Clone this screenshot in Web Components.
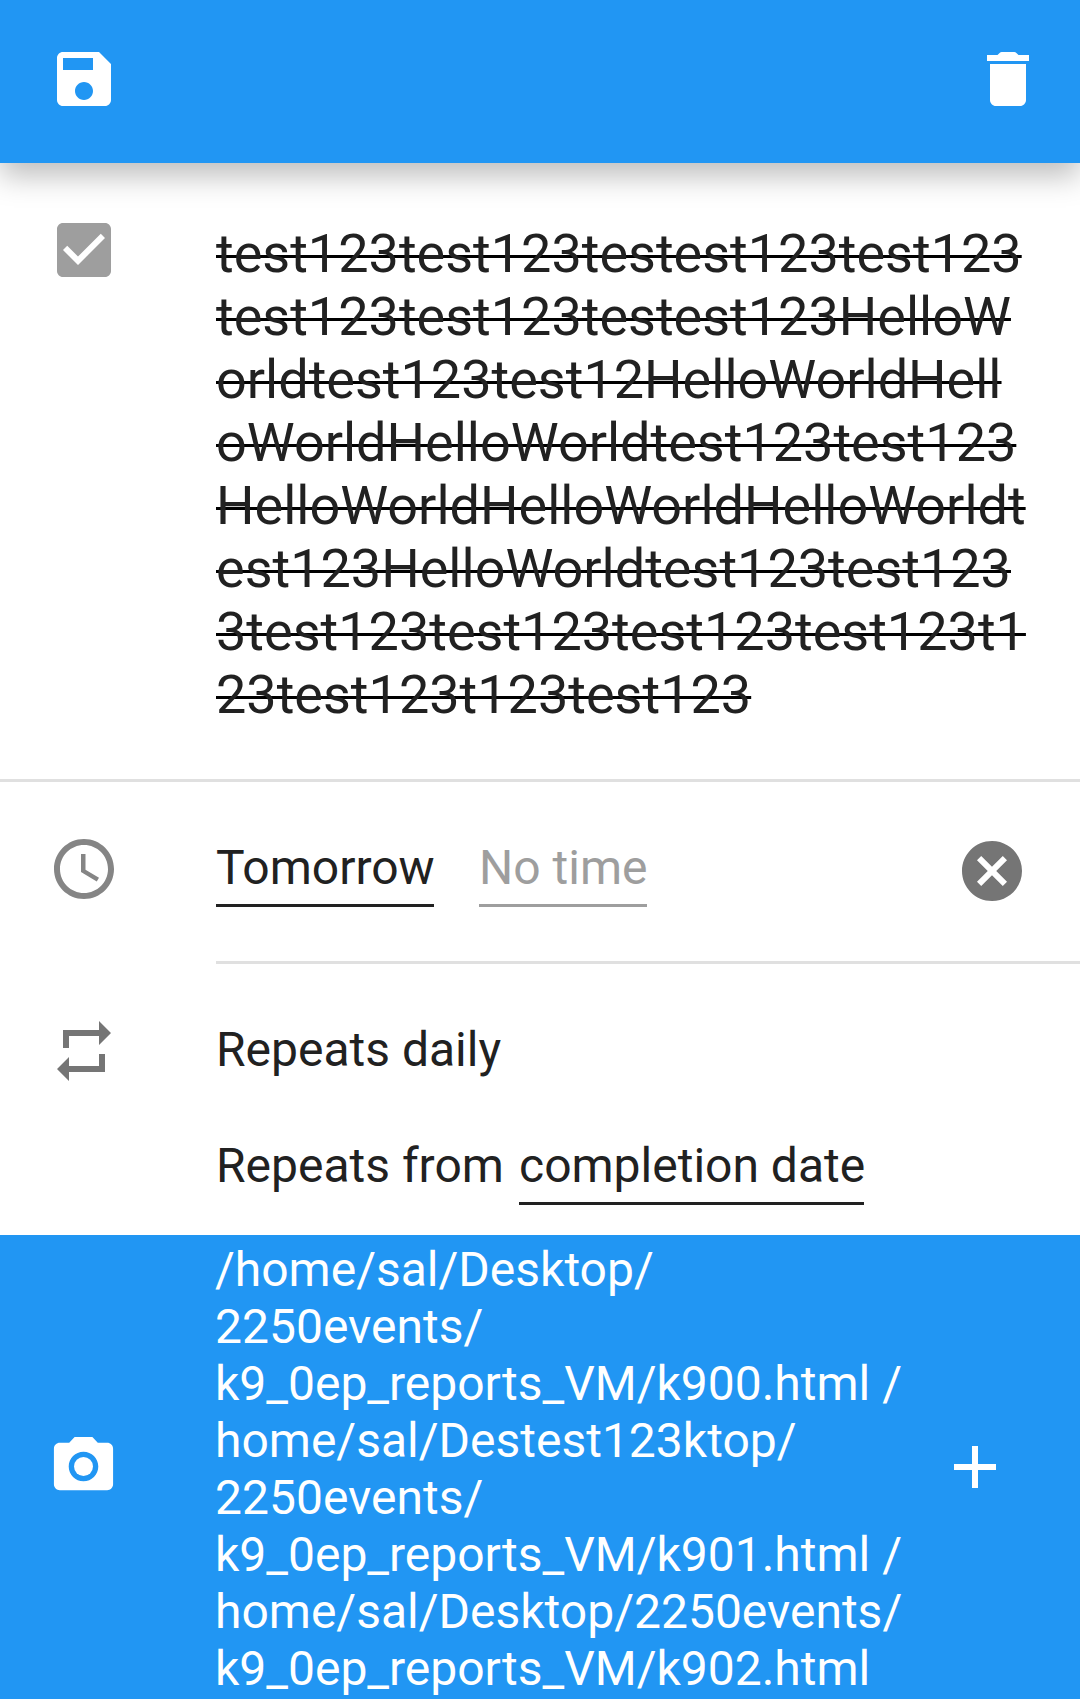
<!DOCTYPE html>
<html lang="en">
<head>
<meta charset="utf-8">
<title>Edit task</title>
<style>
html,body{margin:0;padding:0;background:#fff}
body{font-family:Roboto,"Liberation Sans",sans-serif;font-size:48px;line-height:57px;color:#212121;overflow:hidden}
</style>
</head>
<body>
<task-editor></task-editor>
<script>
const icons={
 save:'<path d="M17 3H5c-1.11 0-2 .9-2 2v14c0 1.1.89 2 2 2h14c1.1 0 2-.9 2-2V7l-4-4zm-5 16c-1.66 0-3-1.34-3-3s1.34-3 3-3 3 1.34 3 3-1.34 3-3 3zm3-10H5V5h10v4z"/>',
 trash:'<path d="M6 19c0 1.1.9 2 2 2h8c1.1 0 2-.9 2-2V7H6v12zM19 4h-3.5l-.7-.7Q14.5 3 14.1 3H9.9Q9.5 3 9.2 3.3L8.5 4H5v2h14V4z"/>',
 check:'<path d="M19 3H5c-1.11 0-2 .9-2 2v14c0 1.1.89 2 2 2h14c1.11 0 2-.9 2-2V5c0-1.1-.89-2-2-2zm-9 14l-5-5 1.41-1.41L10 14.17l7.59-7.59L19 8l-9 9z"/>',
 clock:'<path d="M11.99 2C6.47 2 2 6.48 2 12s4.47 10 9.99 10C17.52 22 22 17.52 22 12S17.52 2 11.99 2zM12 20c-4.42 0-8-3.58-8-8s3.58-8 8-8 8 3.58 8 8-3.58 8-8 8zM12.5 7H11v6l5.25 3.15.75-1.23-4.5-2.67z"/>',
 cancel:'<path d="M12 2C6.47 2 2 6.47 2 12s4.47 10 10 10 10-4.47 10-10S17.53 2 12 2zm5 13.59L15.59 17 12 13.41 8.41 17 7 15.59 10.59 12 7 8.41 8.41 7 12 10.59 15.59 7 17 8.41 13.41 12 17 15.59z"/>',
 repeat:'<path d="M7 7h10v3l4-4-4-4v3H5v6h2V7zm10 10H7v-3l-4 4 4 4v-3h12v-6h-2v4z"/>',
 camera:'<circle cx="12" cy="12" r="3.2"/><path d="M9 2L7.17 4H4c-1.1 0-2 .9-2 2v12c0 1.1.9 2 2 2h16c1.1 0 2-.9 2-2V6c0-1.1-.9-2-2-2h-3.17L15 2H9zm3 15c-2.76 0-5-2.24-5-5s2.24-5 5-5 5 2.24 5 5-2.24 5-5 5z"/>',
 plus:'<path d="M19 13h-6v6h-2v-6H5v-2h6V5h2v6h6v2z"/>'
};
const define=(name,html)=>customElements.define(name,class extends HTMLElement{
 constructor(){super();this.attachShadow({mode:'open'}).innerHTML=html;}
});
customElements.define('md-icon',class extends HTMLElement{
 connectedCallback(){
  if(this.shadowRoot)return;
  this.attachShadow({mode:'open'}).innerHTML=`<style>:host{display:block;flex:none;width:72px;height:72px}svg{display:block;width:100%;height:100%;fill:currentColor}</style><svg viewBox="0 0 24 24">${icons[this.getAttribute('name')]}</svg>`;
 }
});
define('app-toolbar',`<style>
:host{display:flex;justify-content:space-between;align-items:flex-start;box-sizing:border-box;height:163px;padding:43px 36px 0 48px;background:#2196f3;color:#fff;box-shadow:0 13px 28px 0 rgba(0,0,0,.26);position:relative}
</style><slot></slot>`);
define('form-row',`<style>
:host{display:flex;box-sizing:border-box;align-items:flex-start}
.lead{flex:none;width:168px;margin-left:48px}
.body{flex:1;min-width:0}
</style><div class="lead"><slot name="icon"></slot></div><div class="body"><slot></slot></div><slot name="action"></slot>`);
define('struck-title',`<style>
:host{display:block;font-size:54px;line-height:63px;white-space:nowrap}
span{text-decoration:underline 3px #000;text-underline-offset:-17px;text-decoration-skip-ink:none}
</style><span><slot></slot></span>`);
define('link-field',`<style>
:host{display:inline-block;height:65px;border-bottom:3px solid currentColor;white-space:nowrap}
</style><slot></slot>`);
define('row-divider',`<style>:host{display:block;height:3px;background:#e0e0e0}</style>`);
define('task-editor',`<style>
:host{display:flex;flex-direction:column;width:1080px;height:1699px;overflow:hidden}
.title{height:616px;padding-top:51px}
.title struck-title{margin-top:8px}
.title md-icon{color:#9e9e9e}
.due{height:179px;padding:51px 52px 0 0}
.fields{display:flex;gap:45px;margin-top:6px}
.day{width:218px}
.empty{width:168px;color:#9e9e9e}
.due md-icon[name=clock]{color:#858585}
.due md-icon[name=cancel]{color:#757575;margin-top:2px}
.inset{margin-left:216px}
.repeat{height:271px;padding-top:51px}
.repeat md-icon{color:#757575}
.daily{margin-top:6px}
.from{display:flex;margin-top:59px;white-space:nowrap}
.from span{width:303px}
.from link-field{width:345px}
.files{flex:1;background:#2196f3;color:#fff;padding:6px 69px 0 0}
.files md-icon[name=camera]{width:71px;height:71px;margin-top:190px}
.files md-icon[name=plus]{margin-top:190px}
.paths{white-space:nowrap;margin-left:-1px}
</style>
<app-toolbar><md-icon name="save"></md-icon><md-icon name="trash"></md-icon></app-toolbar>
<form-row class="title"><md-icon slot="icon" name="check"></md-icon>
<struck-title>test123test123testest123test123<br>test123test123testest123HelloW<br>orldtest123test12HelloWorldHell<br>oWorldHelloWorldtest123test123<br>HelloWorldHelloWorldHelloWorldt<br>est123HelloWorldtest123test123<br>3test123test123test123test123t1<br>23test123t123test123</struck-title></form-row>
<row-divider></row-divider>
<form-row class="due"><md-icon slot="icon" name="clock"></md-icon>
<div class="fields"><link-field class="day">Tomorrow</link-field><link-field class="empty">No time</link-field></div>
<md-icon slot="action" name="cancel"></md-icon></form-row>
<row-divider class="inset"></row-divider>
<form-row class="repeat"><md-icon slot="icon" name="repeat"></md-icon>
<div class="daily">Repeats daily</div>
<div class="from"><span>Repeats from</span><link-field>completion date</link-field></div></form-row>
<form-row class="files"><md-icon slot="icon" name="camera"></md-icon>
<div class="paths">/home/sal/Desktop/<br>2250events/<br>k9_0ep_reports_VM/k900.html /<br>home/sal/Destest123ktop/<br>2250events/<br>k9_0ep_reports_VM/k901.html /<br>home/sal/Desktop/2250events/<br>k9_0ep_reports_VM/k902.html</div>
<md-icon slot="action" name="plus"></md-icon></form-row>`);
</script>
</body>
</html>
